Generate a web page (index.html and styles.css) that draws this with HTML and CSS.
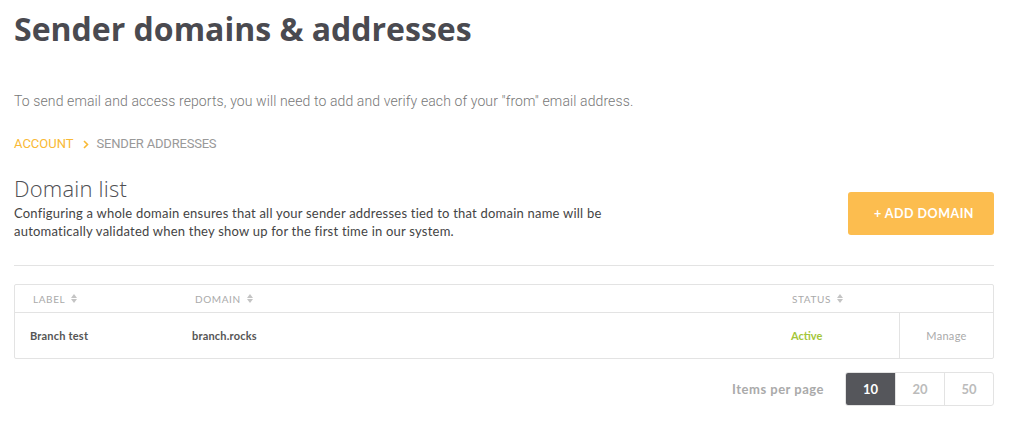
FILE: index.html
```html
<!DOCTYPE html>
<html>
<head>
<meta charset="utf-8">
<link rel="stylesheet" href="styles.css">
</head>
<body>
<div class="page">
  <h1 class="title">Sender domains &amp; addresses</h1>
  <p class="intro">To send email and access reports, you will need to add and verify each of your "from" email address.</p>
  <nav class="crumbs">
    <span class="crumb-link">ACCOUNT</span>
    <svg class="chev" width="6" height="9" viewBox="0 0 6 9"><path d="M1 1l3.5 3.5L1 8" fill="none" stroke="#f9b935" stroke-width="1.6"/></svg>
    <span class="crumb-current">SENDER ADDRESSES</span>
  </nav>
  <section class="section-head">
    <div class="section-text">
      <h2 class="section-title">Domain list</h2>
      <p class="section-desc">Configuring a whole domain ensures that all your sender addresses tied to that domain name will be automatically validated when they show up for the first time in our system.</p>
    </div>
    <button class="add-btn">+ ADD DOMAIN</button>
  </section>
  <hr class="divider">
  <div class="table">
    <div class="row head">
      <div class="cell c-label">LABEL <svg class="sort" width="6" height="9" viewBox="0 0 6 9"><path d="M3 0L6 4H0z M0 5H6L3 9z" fill="#c4c4c4"/></svg></div>
      <div class="cell c-domain">DOMAIN <svg class="sort" width="6" height="9" viewBox="0 0 6 9"><path d="M3 0L6 4H0z M0 5H6L3 9z" fill="#c4c4c4"/></svg></div>
      <div class="cell c-status">STATUS <svg class="sort" width="6" height="9" viewBox="0 0 6 9"><path d="M3 0L6 4H0z M0 5H6L3 9z" fill="#c4c4c4"/></svg></div>
      <div class="cell c-action"></div>
    </div>
    <div class="row body">
      <div class="cell c-label strong">Branch test</div>
      <div class="cell c-domain strong">branch.rocks</div>
      <div class="cell c-status active">Active</div>
      <div class="cell c-action manage">Manage</div>
    </div>
  </div>
  <div class="pager">
    <span class="pager-label">Items per page</span>
    <div class="pager-group">
      <span class="pg on">10</span>
      <span class="pg">20</span>
      <span class="pg">50</span>
    </div>
  </div>
</div>
</body>
</html>
```
FILE: styles.css
```css
* { box-sizing: border-box; }
html, body { margin: 0; padding: 0; background: #fff; }
.page { padding: 0 19px 0 14px; }
.title {
  margin: 0;
  padding-top: 9px;
  font-family: "Open Sans", sans-serif;
  font-weight: 700;
  font-size: 32px;
  line-height: 40px;
  color: #4a4a50;
}
.intro {
  margin: 44px 0 0;
  font-family: Roboto, sans-serif;
  font-weight: 300;
  font-size: 14px;
  line-height: 16px;
  letter-spacing: 0.11px;
  color: #777;
}
.crumbs {
  display: flex;
  align-items: center;
  margin-top: 27px;
  font-family: Roboto, sans-serif;
  font-size: 13px;
  line-height: 16px;
}
.chev { display: block; margin: 0 8px 0 9px; }
.crumb-link { color: #f9b935; }
.crumb-current { color: #999; letter-spacing: -0.2px; }
.section-head {
  display: flex;
  justify-content: space-between;
  align-items: flex-start;
  margin-top: 23px;
}
.section-title {
  margin: 0;
  font-family: "Open Sans", sans-serif;
  font-weight: 300;
  font-size: 22px;
  line-height: 26px;
  letter-spacing: 0.2px;
  color: #4e4e52;
}
.section-desc {
  margin: 3px 0 0;
  width: 620px;
  font-family: Lato, "Open Sans", sans-serif;
  font-size: 13px;
  line-height: 18px;
  letter-spacing: 0.22px;
  color: #444;
}
.add-btn {
  margin-top: 17px;
  width: 146px;
  height: 43px;
  border: 0;
  border-radius: 3px;
  background: #fcbd4f;
  color: #fff;
  font-family: Lato, "Open Sans", sans-serif;
  font-weight: 700;
  font-size: 12.5px;
  letter-spacing: 0.5px;
  padding: 0 0 0 6px;
}
.divider {
  margin: 25px 0 18px;
  border: 0;
  border-top: 1px solid #e3e3e3;
}
.table {
  border: 1px solid #e3e3e3;
  border-radius: 2px;
  font-family: Lato, "Open Sans", sans-serif;
}
.row { display: flex; }
.row.head { height: 28px; border-bottom: 1px solid #e3e3e3; }
.row.body { height: 45px; }
.cell { display: flex; align-items: center; }
.c-label { width: 162px; padding-left: 18px; }
.c-domain { width: 569px; padding-left: 18px; }
.c-status { width: 153px; padding-left: 45px; }
.body .c-label { padding-left: 15px; }
.body .c-domain { padding-left: 15px; }
.c-action { flex: 1; justify-content: center; }
.head .cell {
  font-size: 10px;
  color: #aaa;
  letter-spacing: 0.6px;
  gap: 6px;
}
.head .c-status { padding-left: 46px; }
.strong { font-size: 11px; font-weight: 700; color: #555; letter-spacing: 0.2px; }
.active { font-size: 11px; font-weight: 700; color: #a4c639; padding-left: 45px; }
.manage { border-left: 1px solid #e3e3e3; font-size: 11px; color: #aaa; letter-spacing: 0.3px; }
.pager {
  display: flex;
  justify-content: flex-end;
  align-items: center;
  gap: 21px;
  margin-top: 13px;
  font-family: Lato, "Open Sans", sans-serif;
}
.pager-label { font-size: 13px; color: #aaa; font-weight: 700; letter-spacing: 0.5px; }
.pager-group {
  display: flex;
  border: 1px solid #e3e3e3;
  border-radius: 3px;
  overflow: hidden;
}
.pg {
  width: 49px;
  height: 32px;
  display: flex;
  align-items: center;
  justify-content: center;
  font-size: 13px;
  color: #bbb;
  font-weight: 700;
  border-left: 1px solid #e3e3e3;
}
.pg:first-child { border-left: 0; }
.pg.on { background: #55565b; color: #fff; }
```
